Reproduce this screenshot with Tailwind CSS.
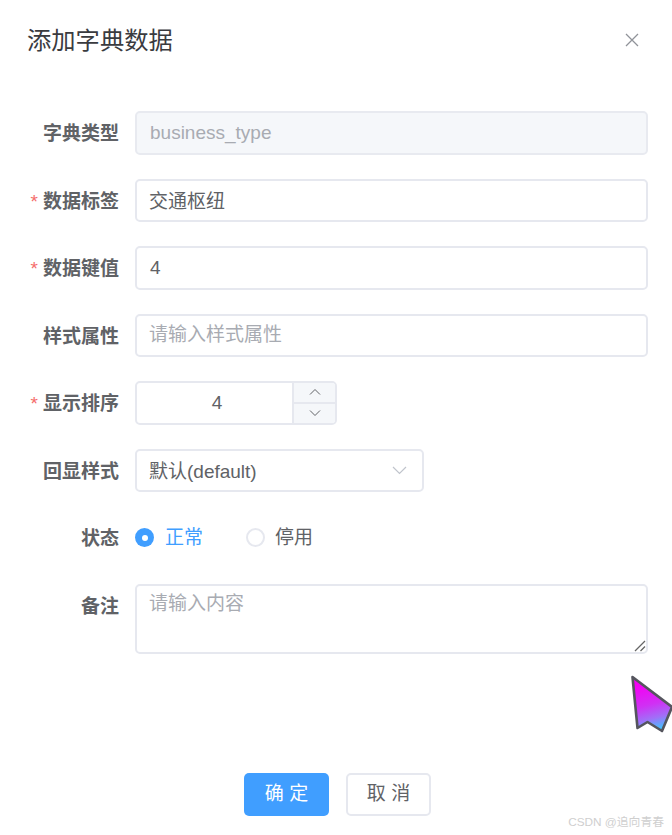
<!DOCTYPE html>
<html lang="zh-CN">
<head>
  <meta charset="UTF-8" />
  <meta name="viewport" content="width=device-width, initial-scale=1.0" />
  <title>添加字典数据</title>
  <script src="https://cdn.jsdelivr.net/npm/@tailwindcss/browser@4"></script>
</head>
<body class="bg-white h-[835px] w-[672px] relative overflow-hidden font-['Liberation_Sans','Noto_Sans_CJK_SC',sans-serif] text-[#606266]">
  <!-- header -->
  <div class="flex justify-between pl-[27px] pr-[32px] pt-[23px] h-[111px] items-start">
    <h1 class="text-[24.3px] leading-[36px] text-[#3a3b3f] font-normal">添加字典数据</h1>
    <svg class="w-[16px] h-[16px] mt-[9px]" viewBox="0 0 16 16" fill="none" stroke="#909399" stroke-width="1.3"><path d="M2 2l12 12M14 2L2 14"/></svg>
  </div>

  <form class="flex flex-col gap-[24px] text-[19px] pr-[24px]">
    <div class="flex items-center h-[43.5px]">
      <label class="w-[119px] pt-[2px] text-right font-bold leading-none">字典类型</label>
      <div class="ml-[16px] flex-1 h-full flex items-center px-[13px] rounded-[5px] border-2 border-[#e8eaf0] bg-[#f5f7fa] text-[#a8abb2]">business_type</div>
    </div>
    <div class="flex items-center h-[43.5px]">
      <label class="w-[119px] pt-[2px] text-right font-bold leading-none"><span class="text-[#f56c6c] font-normal mr-[5px]">*</span>数据标签</label>
      <div class="ml-[16px] flex-1 h-full flex items-center pl-[12px] pr-[13px] pt-[4px] rounded-[5px] border-2 border-[#e6e8ef]">交通枢纽</div>
    </div>
    <div class="flex items-center h-[43.5px]">
      <label class="w-[119px] pt-[2px] text-right font-bold leading-none"><span class="text-[#f56c6c] font-normal mr-[5px]">*</span>数据键值</label>
      <div class="ml-[16px] flex-1 h-full flex items-center px-[13px] rounded-[5px] border-2 border-[#e6e8ef]">4</div>
    </div>
    <div class="flex items-center h-[43.5px]">
      <label class="w-[119px] pt-[2px] text-right font-bold leading-none">样式属性</label>
      <div class="ml-[16px] flex-1 h-full flex items-center pl-[12px] pr-[13px] rounded-[5px] border-2 border-[#e6e8ef] text-[#a8abb2]">请输入样式属性</div>
    </div>
    <div class="flex items-center h-[43.5px]">
      <label class="w-[119px] pt-[2px] text-right font-bold leading-none"><span class="text-[#f56c6c] font-normal mr-[5px]">*</span>显示排序</label>
      <div class="ml-[16px] w-[202px] h-full flex rounded-[5px] border-2 border-[#e6e8ef] overflow-hidden">
        <div class="flex-1 flex items-center justify-center pl-[5px]">4</div>
        <div class="w-[43px] flex flex-col border-l-2 border-[#e6e8ef] bg-[#f5f7fa]">
          <div class="flex-1 flex items-center justify-center border-b-2 border-[#e6e8ef]">
            <svg class="w-[12px] h-[8px]" viewBox="0 0 12 8" fill="none" stroke="#606266" stroke-width="1"><path d="M1 6.5L6 1.5l5 5"/></svg>
          </div>
          <div class="flex-1 flex items-center justify-center">
            <svg class="w-[12px] h-[8px]" viewBox="0 0 12 8" fill="none" stroke="#606266" stroke-width="1"><path d="M1 1.5l5 5 5-5"/></svg>
          </div>
        </div>
      </div>
    </div>
    <div class="flex items-center h-[43.5px]">
      <label class="w-[119px] pt-[2px] text-right font-bold leading-none">回显样式</label>
      <div class="ml-[16px] w-[289px] h-full flex items-center justify-between pl-[12px] pr-[15px] rounded-[5px] border-2 border-[#e6e8ef]">
        <span class="pt-[4px]">默认(default)</span>
        <svg class="w-[15px] h-[9px]" viewBox="0 0 15 9" fill="none" stroke="#c0c4cc" stroke-width="1.2"><path d="M1 1l6.5 6.5L14 1"/></svg>
      </div>
    </div>
    <div class="flex items-center h-[43.5px]">
      <label class="w-[119px] pt-[2px] text-right font-bold leading-none">状态</label>
      <div class="ml-[16px] flex items-center">
        <span class="w-[19px] h-[19px] rounded-full bg-[#409eff] flex items-center justify-center"><span class="w-[6px] h-[6px] rounded-full bg-white"></span></span>
        <span class="ml-[11px] text-[#409eff]">正常</span>
        <span class="ml-[43px] w-[19px] h-[19px] rounded-full border-2 border-[#e6e8ef]"></span>
        <span class="ml-[10px]">停用</span>
      </div>
    </div>
    <div class="flex items-start h-[70px]">
      <label class="w-[119px] pt-[2px] text-right font-bold leading-none mt-[11px]">备注</label>
      <div class="relative ml-[16px] flex-1 h-full pl-[12px] pr-[13px] pt-[4px] rounded-[5px] border-2 border-[#e6e8ef] text-[#a8abb2]">
        请输入内容
        <svg class="absolute right-0 bottom-0 w-[12px] h-[12px]" viewBox="0 0 12 12" fill="none" stroke="#666" stroke-width="1.3"><path d="M1 11L11 1M6.5 11L11 6.5"/></svg>
      </div>
    </div>
  </form>

  <!-- footer buttons -->
  <div class="flex gap-[17px] mt-[119px] pl-[244px] text-[19px]">
    <button class="w-[85px] h-[43px] rounded-[5px] bg-[#409eff] text-white">确 定</button>
    <button class="w-[85px] h-[43px] rounded-[5px] border-2 border-[#e6e8ef]">取 消</button>
  </div>

  <!-- cursor overlay -->
  <svg class="absolute left-[628px] top-[672px] w-[44px] h-[62px] blur-[0.6px]" viewBox="0 0 44 62" fill="none">
    <defs>
      <linearGradient id="cursorFill" x1="16" y1="12" x2="28" y2="58" gradientUnits="userSpaceOnUse">
        <stop offset="0" stop-color="#f400f4"/>
        <stop offset="0.45" stop-color="#d030f4"/>
        <stop offset="0.75" stop-color="#a070f8"/>
        <stop offset="1" stop-color="#40c4ff"/>
      </linearGradient>
    </defs>
    <path d="M4.5 5L44 35 34 59 19.5 50 9.5 56Z" fill="url(#cursorFill)" stroke="#55555e" stroke-width="2.6" stroke-linejoin="round"/>
  </svg>

  <span class="absolute right-[8px] bottom-[6px] text-[11.8px] leading-none text-[#cfcfcf]">CSDN @追向青春</span>
</body>
</html>
